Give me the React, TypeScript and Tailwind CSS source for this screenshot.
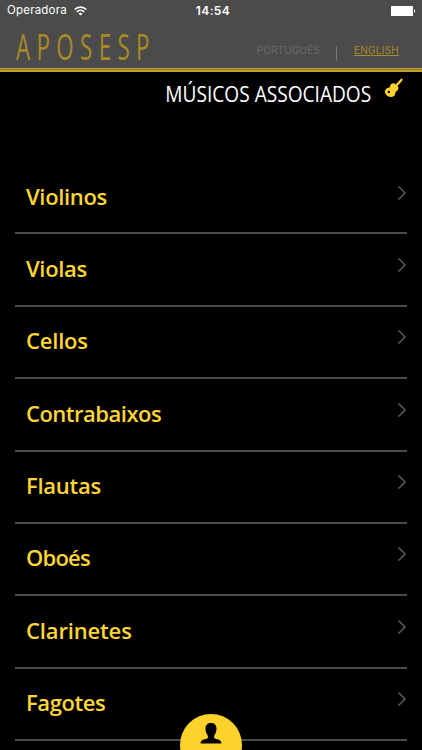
const sections = [
  { name: 'Violinos', spacing: 'tracking-[-0.35px]' },
  { name: 'Violas', spacing: 'tracking-[-0.35px]' },
  { name: 'Cellos', spacing: 'tracking-[-0.2px]' },
  { name: 'Contrabaixos', spacing: 'tracking-[-0.5px]' },
  { name: 'Flautas', spacing: 'tracking-[-0.25px]' },
  { name: 'Oboés', spacing: 'tracking-[-0.8px]' },
  { name: 'Clarinetes', spacing: 'tracking-[-0.15px]' },
  { name: 'Fagotes', spacing: 'tracking-[-0.4px]' },
];

function WifiIcon() {
  return (
    <svg width="13" height="10" viewBox="0 0 13 10" fill="none" stroke="#fff" strokeWidth="1.7">
      <path d="M0.7 3.5C4 0.3 9 0.3 12.3 3.500" />
      <path d="M2.8 5.800c2.100-2 5.300-2 7.400 0" />
      <path d="M6.5 9.600L4.500 7.600c1.100-1.100 2.900-1.100 4 0z" fill="#fff" stroke="none" />
    </svg>
  );
}

function BatteryIcon() {
  return (
    <svg width="25" height="10" viewBox="0 0 25 10" fill="#fff">
      <rect width="22" height="10" rx="0.6" />
      <path d="M23 3.200c1.600 0.500 1.600 3.100 0 3.600z" />
    </svg>
  );
}

function GuitarIcon() {
  return (
    <svg width="20" height="20" viewBox="0 0 20 20">
      <path d="M11 9L17.600 1.700" stroke="#ffd22b" strokeWidth="2.200" strokeLinecap="round" />
      <path
        d="M7 6.200C8.500 4.900 9.800 4.900 11 5.700l2.800 2.600c1.300 1.700 0.600 3.600-1 4.700-0.900 0.600-1.500 1.200-1.500 2.300-0.200 2.300-1.800 3.700-4.300 3.700C3.500 19 1 16.600 1 13.600c0-2.200 1.500-3.600 3.600-3.800 1.200-0.100 1.500-0.600 1.400-1.500 0-0.900 0.300-1.500 1-2.100z"
        fill="#ffd22b"
      />
      <circle cx="4.900" cy="14" r="1.200" fill="#000" />
    </svg>
  );
}

function PersonIcon() {
  return (
    <svg width="22" height="21" viewBox="0 0 22 21" fill="#000">
      <path d="M11 0C7.600 0 5.500 2 5.500 5.600c0 3.100 0.900 5.500 2.400 7.100v2.100c-0.500 1.200-5.600 1.600-6.700 3.400C0.700 18.900 0.500 19.800 0.500 20.500h21c0-0.700-0.200-1.600-0.700-2.300-1.100-1.800-6.200-2.200-6.700-3.400v-2.100c1.500-1.600 2.400-4 2.400-7.100C16.500 2 14.400 0 11 0z" />
    </svg>
  );
}

export default function App() {
  return (
    <main className="relative h-[750px] w-[422px] overflow-hidden bg-black font-['Open_Sans',sans-serif]">
      <header className="h-[72px] bg-[#4b4b4b] flex flex-col">
        <div className="grid h-[21px] shrink-0 grid-cols-3 items-center pl-[7px] pr-[6px] font-['Inter',sans-serif] text-[11.5px] text-white">
          <div className="flex items-center gap-[7px] pt-px">
            <span className="tracking-[0.2px]">Operadora</span>
            <WifiIcon />
          </div>
          <span className="pl-[3px] pt-px text-center text-[12px] font-semibold tracking-[0.4px]">14:54</span>
          <div className="flex justify-end">
            <BatteryIcon />
          </div>
        </div>
        <div className="flex h-[47px] shrink-0 justify-between pl-[16px] pr-[23px]">
          <div className="h-[47px] w-[140px]">
            <span className="inline-block origin-left scale-x-[0.62] text-[36px] font-medium leading-[52px] tracking-[10.300px] text-[#a98a25]">
              APOSESP
            </span>
          </div>
          <div className="flex items-center pt-[12px] font-['Inter',sans-serif] text-[10px]">
            <span className="tracking-[0.2px] text-[#6c6c6c]">PORTUGUÊS</span>
            <span className="ml-[16px] mt-[6px] h-[15px] w-px bg-[#777]" />
            <span className="ml-[17px] tracking-[0.250px] text-[#a98a25] underline">ENGLISH</span>
          </div>
        </div>
        <div className="h-[4px] border-b-2 border-t border-[#c2a035] bg-[#8f752a]" />
      </header>

      <div className="flex h-[90px] justify-end pr-[18px]">
        <h1 className="origin-right scale-x-[0.91] pt-[7px] text-[21px] leading-[30px] text-white">
          MÚSICOS ASSOCIADOS
        </h1>
        <div className="ml-[13px] pt-[6px]">
          <GuitarIcon />
        </div>
      </div>

      <ul className="mx-[15px]">
        {sections.map((section) => (
          <li
            key={section.name}
            className="flex h-[72.4px] justify-between border-b-2 border-[#4a4a4a] pl-[11px] pt-[18.5px]"
          >
            <span className={`text-[22px] font-semibold leading-[30px] text-[#ffd633] ${section.spacing}`}>
              {section.name}
            </span>
            <svg className="mt-[4px]" width="10" height="16" viewBox="0 0 10 16" fill="none" stroke="#555" strokeWidth="1.7">
              <path d="M1.5 1.5L8 8l-6.500 6.500" />
            </svg>
          </li>
        ))}
      </ul>

      <button className="absolute left-[180px] top-[714px] flex h-[62px] w-[62px] justify-center rounded-full bg-[#ffd22b] pt-[9px]">
        <PersonIcon />
      </button>
    </main>
  );
}
